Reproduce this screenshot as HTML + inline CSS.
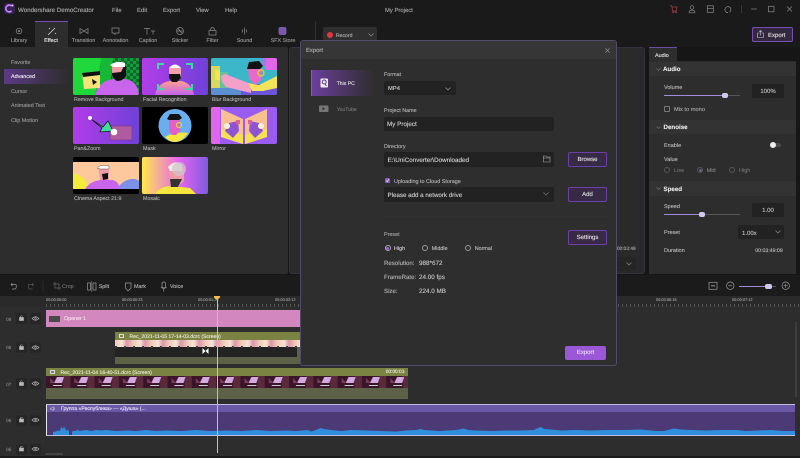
<!DOCTYPE html>
<html><head><meta charset="utf-8"><style>
html,body{margin:0;padding:0;background:#161617;width:800px;height:458px;overflow:hidden}
body{position:relative;font-family:"Liberation Sans","Noto Sans CJK SC",sans-serif;font-size:5.4px;color:#b9b9b9;text-rendering:geometricPrecision}
.a{position:absolute}
.t{position:absolute;white-space:nowrap;line-height:10px;height:10px;margin-top:1px;-webkit-text-stroke:.12px currentColor}
.c{transform:translateX(-50%)}
.b{position:absolute;box-sizing:border-box;border:1px solid #6d3fa8;background:#372a45;border-radius:2px;color:#e0e0e0;text-align:center;font-size:6px;line-height:14.500px;-webkit-text-stroke:.12px currentColor}
.in{position:absolute;background:#222223;border-radius:2px}
svg{position:absolute;overflow:visible}
.th{position:absolute;width:66px;height:37px}
.r{position:absolute;width:6px;height:6px;box-sizing:border-box;border:1px solid #666;border-radius:50%}
.lock{position:absolute;width:11px;height:11px;background:#262626;border-radius:2px}
.m{color:#a8a8a8;font-size:5.900px}
.tb{color:#999;font-size:5.400px}
.l{color:#adadad;font-size:5.300px}
.s{color:#979797;font-size:5.400px}
.d{color:#b2b2b2;font-size:5.400px}
.v{color:#cfcfcf;font-size:6.300px}
.h{color:#e6e6e6;font-weight:bold;font-size:6.200px}
.p{color:#b8b8b8;font-size:5.500px}
.rl{color:#999;font-size:3.900px}
.n{color:#888;font-size:4.500px}
.ct{color:#e8ead8;font-size:5.100px}
</style></head><body>

<!-- title bar -->
<div class="a" style="left:0;top:0;width:800px;height:47px;background:#1a1a1b"></div>
<div class="a" style="left:4px;top:3px;width:11px;height:11px;background:#3a2258;border-radius:3px"></div>
<svg style="left:4px;top:3px" width="11" height="11"><path d="M7.5 3A3.4 3.4 0 1 0 7.5 8" stroke="#c78bff" stroke-width="1.6" fill="none"/><circle cx="8.5" cy="2.5" r="1" fill="#e8d0ff"/></svg>
<div class="t" style="left:18px;top:4.500px;color:#adadad;font-size:6.200px">Wondershare DemoCreator</div>
<div class="t m" style="left:112px;top:4.500px">File</div>
<div class="t m" style="left:137px;top:4.500px">Edit</div>
<div class="t m" style="left:163px;top:4.500px">Export</div>
<div class="t m" style="left:196px;top:4.500px">View</div>
<div class="t m" style="left:225px;top:4.500px">Help</div>
<div class="t m" style="left:385px;top:4.500px">My Project</div>

<svg style="left:670px;top:5px" width="130" height="14" fill="none" stroke="#8a8a8a" stroke-width=".7">
<path d="M.2 .7H1.500L2.800 6H6.300L7 2H2" stroke="#a83e46"/><circle cx="3.200" cy="7.300" r=".6" stroke="#a83e46"/><circle cx="6" cy="7.300" r=".6" stroke="#a83e46"/>
<circle cx="22" cy="2.500" r="1.800"/><path d="M19.200 7.800V6.800Q19.200 5.200 22 5.200T24.800 6.800V7.800Z"/>
<rect x="37.300" y=".8" width="6" height="6.500"/><path d="M37.300 3.500H43.300"/>
<path d="M57 7.500A3 3 0 1 1 59.500 7.200M56 7.500H58"/>
<path d="M71.500 0V8" stroke="#444"/>
<path d="M81 4H87"/><rect x="98.500" y="1.300" width="5.500" height="5.500"/><path d="M117 1.500L122 6.500M122 1.500L117 6.500"/></svg>

<!-- toolbar tabs -->
<div class="a" style="left:35px;top:21px;width:33px;height:26px;background:#2d2d2e;border-top:1px solid #7a4fb5;box-sizing:border-box"></div>
<svg style="left:0;top:26px" width="300" height="12" fill="none" stroke="#8c8c8c" stroke-width=".7">
<circle cx="19" cy="5" r="2.800"/><circle cx="19" cy="5" r=".8"/>
<path d="M48 9L55 2" stroke="#ddd"/><path d="M49 2L50 3M55 7L56 8" stroke="#ddd"/>
<path d="M80 2.500L84 5L80 7.500ZM88 2.500L84 5L88 7.500Z"/>
<path d="M112 2H119V7H116L115 8.500L114 7H112Z"/>
<path d="M144 2.500H150M147 2.500V8.500M151 5H155M153 5V8.500"/>
<circle cx="180" cy="5" r="3.500"/><path d="M177 5L183 5M178 2.500L182 7.500"/>
<rect x="209" y="4.500" width="7" height="4.500"/><path d="M210.500 4.500V3Q212.500 0 214.500 3V4.500"/>
<path d="M244.500 1.500V8.500M242.500 3.500V6.500M246.500 3.500V6.500"/>
<rect x="279" y="1.500" width="7" height="7" rx="1.500" fill="#7a56b0" stroke="#8c67c2"/></svg>
<div class="t c tb" style="left:19px;top:34.700px">Library</div>
<div class="t c tb" style="left:51px;top:34.700px;color:#eee">Effect</div>
<div class="t c tb" style="left:83.500px;top:34.700px">Transition</div>
<div class="t c tb" style="left:115.500px;top:34.700px">Annotation</div>
<div class="t c tb" style="left:148px;top:34.700px">Caption</div>
<div class="t c tb" style="left:180px;top:34.700px">Sticker</div>
<div class="t c tb" style="left:212.500px;top:34.700px">Filter</div>
<div class="t c tb" style="left:244.500px;top:34.700px">Sound</div>
<div class="t c tb" style="left:283px;top:34.700px">SFX Store</div>

<!-- left panel -->
<div class="a" style="left:0;top:47px;width:288px;height:227px;background:#2d2d2e;border-radius:0 2px 2px 0"></div>
<div class="a" style="left:4px;top:69px;width:64px;height:15px;background:linear-gradient(90deg,#5c3a86,#2d2d2e)"></div>
<div class="t s" style="left:11px;top:57px">Favorite</div>
<div class="t s" style="left:11px;top:71.300px;color:#eee">Advanced</div>
<div class="t s" style="left:11px;top:85.700px">Cursor</div>
<div class="t s" style="left:11px;top:100.300px">Animated Text</div>
<div class="t s" style="left:11px;top:115px">Clip Motion</div>

<!-- thumbs -->
<svg class="th" style="left:73px;top:58px" viewBox="0 0 66 37"><defs><clipPath id="cp"><rect width="66" height="37" rx="2"/></clipPath>
<linearGradient id="g1" x1="0" y1="0" x2="1" y2="0"><stop offset="0" stop-color="#b13de8"/><stop offset="1" stop-color="#6f41d8"/></linearGradient>
<linearGradient id="g2" x1="0" y1="0" x2="0" y2="1"><stop offset="0" stop-color="#ff9f8f"/><stop offset="1" stop-color="#c163f0"/></linearGradient>
<linearGradient id="g4" x1="0" y1="0" x2="1" y2="0"><stop offset="0" stop-color="#ffe94a"/><stop offset=".55" stop-color="#e865f0"/><stop offset="1" stop-color="#7f5be0"/></linearGradient>
<pattern id="ck" width="6" height="6" patternUnits="userSpaceOnUse"><rect width="6" height="6" fill="#169a3a"/><rect width="3" height="3" fill="#0c6a2a"/><rect x="3" y="3" width="3" height="3" fill="#0c6a2a"/></pattern></defs>
<g clip-path="url(#cp)"><rect width="66" height="37" fill="#1fd83c"/><rect x="36" width="30" height="37" fill="url(#ck)"/><path d="M28 0H40L36 37H22Z" fill="#18b837"/>
<path d="M22 37Q26 23 40 21L52 21Q65 23 66 37Z" fill="#c964ec"/><path d="M39 8H52V18Q50 23 44 23Q40 21 39 17Z" fill="#ee9ba8"/><path d="M39 15L48 14L51 8H53V18Q50 23 44 23Q40 21 39 17Z" fill="#111"/><path d="M37 7Q44 2 52 5V9H40Z" fill="#fff"/>
<path d="M9 15L27 13V30L11 31Z" fill="#f8e27a"/><path d="M9 15L27 13V17L10 19Z" fill="#111"/><path d="M19 21L24 24L20 27Z" fill="#111"/></g></svg>

<svg class="th" style="left:142px;top:58px" viewBox="0 0 66 37"><g clip-path="url(#cp)"><rect width="66" height="37" fill="url(#g1)"/>
<path d="M13 37Q15 25 28 23H39Q50 25 52 37Z" fill="url(#g2)"/><path d="M27 10H39V20L35 24H30L27 20Z" fill="#f0a0aa"/><path d="M27 16L38 16L39 20L35 24H30L27 20Z" fill="#111"/><path d="M27 10Q33 3 39 10Z" fill="#fff"/>
<path d="M16 11V6H22M50 11V6H44M16 26V31H22M50 26V31H44" stroke="#34e0a0" stroke-width="2" fill="none"/></g></svg>

<svg class="th" style="left:211px;top:58px" viewBox="0 0 66 37"><g clip-path="url(#cp)"><rect width="66" height="37" fill="#3bb7c9"/><rect x="0" y="8" width="9" height="24" fill="#d7d860"/><rect x="4" y="12" width="5" height="10" fill="#f4e64a"/><rect x="9" y="14" width="8" height="18" fill="#66c0a0"/><rect x="30" y="26" width="36" height="11" fill="#6c55d8"/><rect x="0" y="30" width="30" height="7" fill="#5b8fd0"/><rect x="54" y="0" width="12" height="12" fill="#e266e8"/><rect x="50" y="0" width="5" height="8" fill="#8f85e0"/>
<path d="M10 18L14 16L40 26V35L15 29L11 24Z" fill="#f5a0c8"/><path d="M37 25L48 27L66 18V30L52 33H41Z" fill="#f4e35a"/><path d="M37 9H50V22L44 27L38 21Z" fill="#e86ac8"/><path d="M36 11L38 4L48 3L52 8L49 11Z" fill="#111"/><circle cx="50" cy="15" r="3" fill="none" stroke="#e0c93a" stroke-width="1.500"/></g></svg>

<svg class="th" style="left:73px;top:107px" viewBox="0 0 66 37"><g clip-path="url(#cp)"><rect width="66" height="37" fill="url(#g1)"/><rect x="37" y="19" width="22" height="14" fill="#b05aa0" stroke="#7d3d90" stroke-width=".7"/><path d="M18 12L30 20L35 14L40 24L27 25L29 21Z" fill="#3fe09a" stroke="#111" stroke-width=".7"/><circle cx="17" cy="11" r="2" fill="#fff"/><circle cx="41" cy="25" r="3.300" fill="#fff"/></g></svg>

<svg class="th" style="left:142px;top:107px" viewBox="0 0 66 37"><g clip-path="url(#cp)"><rect width="66" height="37" fill="#000"/><circle cx="33" cy="18.500" r="16.500" fill="#6aaef0"/><path d="M23 30Q33 24 46 26Q40 35 33 35Q27 35 23 30Z" fill="#f5e640"/><path d="M27 12H38V24L34 28H30L27 24Z" fill="#e25fc8"/><path d="M25 12L28 7H37L40 11L37 13H27Z" fill="#111"/><circle cx="37" cy="18" r="2.500" fill="none" stroke="#e8d040" stroke-width="1.200"/></g></svg>

<svg class="th" style="left:211px;top:107px" viewBox="0 0 66 37"><g clip-path="url(#cp)"><rect width="66" height="37" fill="#9a5cf0"/><rect width="9" height="37" fill="#e066ee"/><path d="M10 2L32 12V37L10 30Z" fill="#f8c090"/><path d="M56 2L34 12V37L56 30Z" fill="#f8c090"/><path d="M10 22L32 28V37L10 30Z" fill="#f4e050"/><path d="M56 22L34 28V37L56 30Z" fill="#f4e050"/><path d="M14 24L18 16L27 14L28 24L22 31Z" fill="#8f55d0"/><path d="M52 24L48 16L39 14L38 24L44 31Z" fill="#8f55d0"/><circle cx="16" cy="19" r="3" fill="#f4efe0"/><circle cx="50" cy="19" r="3" fill="#f4efe0"/><rect x="25" y="13" width="4" height="4" fill="#e0609a"/><rect x="37" y="13" width="4" height="4" fill="#e0609a"/></g></svg>

<svg class="th" style="left:73px;top:157px" viewBox="0 0 66 37"><g clip-path="url(#cp)"><rect width="66" height="37" fill="#000"/><rect y="5" width="66" height="27" fill="#fdc99c"/><path d="M0 16Q13 19 16 32H0Z" fill="#f4ec3a"/><path d="M44 32Q50 22 60 22Q64 22 66 24V32Z" fill="#7d8fe8"/><path d="M12 32Q18 23 30 23H40Q46 25 47 32Z" fill="#c964ec"/><path d="M25 10H36V23H27Z" fill="#ee9ba8"/><path d="M29 17L35 16V22L30 23Z" fill="#111"/><path d="M24 11Q27 7 36 9V12H27Z" fill="#fff" stroke="#333" stroke-width=".4"/></g></svg>

<svg class="th" style="left:142px;top:157px" viewBox="0 0 66 37"><g clip-path="url(#cp)"><rect width="66" height="37" fill="url(#g4)"/><path d="M13 37Q18 29 30 29L48 31L54 37Z" fill="#f4e63c"/><path d="M27 10H42V24L36 30H28Z" fill="#ee9ba8"/><path d="M28 22H40L36 30H29Z" fill="#333"/><path d="M26 10Q33 2 40 8V14H28Z" fill="#f4f0e0"/><circle cx="37" cy="12" r="7" fill="#cfc4cc" opacity=".75"/></g></svg>

<div class="t l" style="left:74px;top:94px">Remove Background</div>
<div class="t l" style="left:143px;top:94px">Facial Recognition</div>
<div class="t l" style="left:212px;top:94px">Blur Background</div>
<div class="t l" style="left:74px;top:143px">Pan&amp;Zoom</div>
<div class="t l" style="left:143px;top:143px">Mask</div>
<div class="t l" style="left:212px;top:143px">Mirror</div>
<div class="t l" style="left:74px;top:193px">Cinema Aspect 21:9</div>
<div class="t l" style="left:143px;top:193px">Mosaic</div>

<!-- preview panel -->
<div class="a" style="left:289px;top:47px;width:356px;height:227px;background:#2a2a2b;border-radius:3px;border:1px solid #37313f;box-sizing:border-box"></div>
<div class="a" style="left:315px;top:22px;width:1px;height:25px;background:#333"></div>
<div class="a" style="left:323px;top:27px;width:54px;height:20px;background:#2f2f30;border-radius:2px 2px 0 0"></div>
<div class="a" style="left:327px;top:32px;width:6px;height:6px;border-radius:50%;background:#e0383f"></div>
<div class="t" style="left:336px;top:29.700px;color:#b0b0b0;font-size:5.100px">Record</div>
<svg style="left:368px;top:33px" width="6" height="4"><path d="M.5 .5L3 3L5.500 .5" stroke="#888" fill="none" stroke-width=".7"/></svg>
<div class="t" style="left:617px;top:243.700px;color:#a8a8a8;font-size:4.800px">00:03:49</div>
<div class="a" style="left:617px;top:256.500px;width:19px;height:14px;background:#252526;border-radius:2px"></div>
<svg style="left:626px;top:262px" width="6" height="4"><path d="M.5 .5L3 3L5.500 .5" stroke="#888" fill="none" stroke-width=".7"/></svg>

<!-- export top button -->
<div class="a" style="left:752px;top:27px;width:41px;height:15px;box-sizing:border-box;border:1px solid #7a4fb5;border-radius:2px;background:#33293f"></div>
<svg style="left:757px;top:30px" width="9" height="9" fill="none" stroke="#c9c9c9" stroke-width=".6"><path d="M2.500 3H.5V7.500H6.500V3H4.500M3.500 5.500V.5M2 1.800L3.500 .5L5 1.800"/></svg>
<div class="t" style="left:768px;top:29.700px;color:#e0e0e0;font-size:6px">Export</div>

<!-- right panel -->
<div class="a" style="left:649px;top:47px;width:28px;height:15px;background:#2d2d2e;border-top:1px solid #6a4d9c;box-sizing:border-box"></div>
<div class="t" style="left:655px;top:50px;color:#e4e4e4;font-size:5.400px">Audio</div>
<div class="a" style="left:649px;top:61px;width:147px;height:213px;background:#2d2d2e"></div>
<div class="a" style="left:649px;top:62px;width:147px;height:14px;background:#333334"></div>
<div class="a" style="left:649px;top:120px;width:147px;height:14px;background:#333334"></div>
<div class="a" style="left:649px;top:181px;width:147px;height:15px;background:#333334"></div>
<svg style="left:656px;top:68px" width="6" height="130" fill="none" stroke="#777" stroke-width=".6"><path d="M.5 .5L2.500 2.500L4.500 .5M.5 58.500L2.500 60.500L4.500 58.500M.5 119.500L2.500 121.500L4.500 119.500"/></svg>
<div class="t h" style="left:663px;top:64.300px">Audio</div>
<div class="t h" style="left:663.500px;top:122.300px">Denoise</div>
<div class="t h" style="left:663.500px;top:183.700px">Speed</div>
<div class="t p" style="left:664px;top:82px">Volume</div>
<div class="a" style="left:664px;top:94.500px;width:76px;height:1px;background:#555"></div>
<div class="a" style="left:664px;top:94.500px;width:60px;height:1px;background:#a08cd8"></div>
<div class="a" style="left:722px;top:93px;width:6px;height:5px;border-radius:2px;background:#cfc8f0"></div>
<div class="in" style="left:752px;top:83.500px;width:32px;height:14.500px"></div>
<div class="t c" style="left:768px;top:86px;color:#c4c4c4;font-size:6px">100%</div>
<div class="a" style="left:664px;top:106px;width:6px;height:6px;border:1px solid #777;border-radius:1px;box-sizing:border-box"></div>
<div class="t" style="left:674px;top:104px;color:#a8a8a8;font-size:5.700px">Mix to mono</div>
<div class="t p" style="left:664px;top:140.300px">Enable</div>
<div class="a" style="left:770px;top:143px;width:11px;height:4px;border-radius:2px;background:#4a4a4a"></div>
<div class="a" style="left:770px;top:142px;width:6px;height:6px;border-radius:50%;background:#eee"></div>
<div class="t p" style="left:664px;top:154.300px">Value</div>
<div class="r" style="left:664px;top:167px;border-color:#555"></div>
<div class="t" style="left:674px;top:165.300px;color:#707070;font-size:5.500px">Low</div>
<div class="r" style="left:697px;top:167px;border-color:#555"></div>
<div class="a" style="left:698.500px;top:168.500px;width:3px;height:3px;border-radius:50%;background:#6a5a90"></div>
<div class="t" style="left:706.700px;top:165.300px;color:#808080;font-size:5.500px">Mid</div>
<div class="r" style="left:729px;top:167px;border-color:#555"></div>
<div class="t" style="left:739px;top:165.300px;color:#707070;font-size:5.500px">High</div>
<div class="t p" style="left:664px;top:201px">Speed</div>
<div class="a" style="left:664px;top:214px;width:76px;height:1px;background:#555"></div>
<div class="a" style="left:664px;top:214px;width:38px;height:1px;background:#a08cd8"></div>
<div class="a" style="left:699px;top:212px;width:6px;height:5px;border-radius:2px;background:#cfc8f0"></div>
<div class="in" style="left:752px;top:203px;width:32px;height:14px"></div>
<div class="t c" style="left:768px;top:205.300px;color:#c4c4c4;font-size:6px">1.00</div>
<div class="t p" style="left:664px;top:227px">Preset</div>
<div class="in" style="left:738px;top:225px;width:46px;height:14px"></div>
<div class="t" style="left:742px;top:227.500px;color:#c4c4c4;font-size:6px">1.00x</div>
<svg style="left:775px;top:230px" width="6" height="4"><path d="M.5 .5L3 3L5.500 .5" stroke="#888" fill="none" stroke-width=".7"/></svg>
<div class="t p" style="left:664px;top:245px">Duration</div>
<div class="t" style="left:755.300px;top:245px;color:#b8b8b8;font-size:5.200px">00:03:49:09</div>

<!-- timeline -->
<div class="a" style="left:0;top:275px;width:800px;height:21px;background:#1b1b1c"></div>
<svg style="left:0;top:279px" width="190" height="14" fill="none" stroke="#999" stroke-width=".7">
<path d="M11 5.500H16Q17 9 15 10H12M11 5.500L12.500 4M11 5.500L12.500 7"/>
<path d="M33.500 5.500H28.500Q27.500 9 29.500 10H32.500M33.500 5.500L32 4M33.500 5.500L32 7" stroke="#555"/>
<path d="M43 2V13" stroke="#333"/>
<path d="M53 5H59V11M55 3V9H61" stroke="#666"/>
<rect x="87.500" y="4" width="3" height="7"/><rect x="93" y="4" width="3" height="7"/><path d="M91.800 2V13" stroke-width=".5"/>
<path d="M125.500 4H131V9L128 12L125.500 9Z"/>
<rect x="162" y="3" width="3.500" height="6" rx="1.700"/><path d="M161 8Q163.700 11 166.500 8M163.700 10V12.500"/></svg>
<div class="t" style="left:62px;top:281px;color:#707070;font-size:5.400px">Crop</div>
<div class="t" style="left:98.700px;top:281px;color:#b4b4b4;font-size:5.400px">Split</div>
<div class="t" style="left:134px;top:281px;color:#b4b4b4;font-size:5.400px">Mark</div>
<div class="t" style="left:170px;top:281px;color:#b4b4b4;font-size:5.400px">Voice</div>

<svg style="left:705px;top:279px" width="90" height="14" fill="none" stroke="#999" stroke-width=".7">
<rect x="4" y="3.300" width="8" height="7"/><path d="M6 6.800H10" stroke-width="1"/>
<circle cx="25.300" cy="6.700" r="3.700"/><path d="M23.300 6.700H27.300"/>
<circle cx="80.700" cy="6.700" r="3.700"/><path d="M78.700 6.700H82.700M80.700 4.700V8.700"/></svg>
<div class="a" style="left:739px;top:285.500px;width:37px;height:1px;background:#555"></div>
<div class="a" style="left:739px;top:285.500px;width:29px;height:1px;background:#a08cd8"></div>
<div class="a" style="left:765px;top:283.500px;width:6.500px;height:5px;border-radius:2px;background:#cfc8f0"></div>

<div class="a" style="left:0;top:296px;width:800px;height:162px;background:#2d2d2e"></div>
<div class="a" style="left:0;top:296px;width:800px;height:11px;background:#2a2a2b"></div>
<div class="a" style="left:46px;top:304px;width:754px;height:3px;background:repeating-linear-gradient(90deg,#555 0,#555 1px,transparent 1px,transparent 4px)"></div>
<div class="t rl" style="left:46px;top:294.300px">00:00:00:00</div>
<div class="t rl" style="left:122px;top:294.300px">00:00:00:23</div>
<div class="t rl" style="left:198px;top:294.300px">00:00:01:22</div>
<div class="t rl" style="left:275px;top:294.300px">00:00:02:12</div>
<div class="t rl" style="left:656px;top:294.300px">00:00:06:18</div>
<div class="t rl" style="left:732px;top:294.300px">00:00:07:12</div>

<!-- track headers -->
<div class="t n" style="left:6.300px;top:313.700px">09</div>
<div class="t n" style="left:6.300px;top:342.300px">08</div>
<div class="t n" style="left:6.300px;top:378.700px">07</div>
<div class="t n" style="left:6.300px;top:415px">06</div>
<div class="t n" style="left:6.300px;top:444px">05</div>
<div class="lock" style="left:16px;top:313px"></div><div class="lock" style="left:30px;top:313px"></div>
<div class="lock" style="left:16px;top:342px"></div><div class="lock" style="left:30px;top:342px"></div>
<div class="lock" style="left:16px;top:378px"></div><div class="lock" style="left:30px;top:378px"></div>
<div class="lock" style="left:16px;top:414.500px"></div><div class="lock" style="left:30px;top:414.500px"></div>
<div class="lock" style="left:16px;top:443.500px"></div><div class="lock" style="left:30px;top:443.500px"></div>
<svg style="left:0;top:0" width="46" height="458" fill="none" stroke="#bbb" stroke-width=".6">
<defs><g id="lk"><rect x="19.500" y="4.500" width="4" height="3" fill="#bbb"/><path d="M20.500 4.500V3.500Q21.500 2 22.500 3.500"/><path d="M32 5.500Q35.500 2 39 5.500Q35.500 9 32 5.500Z"/><circle cx="35.500" cy="5.500" r=".8"/></g></defs>
<use href="#lk" y="313"/><use href="#lk" y="342"/><use href="#lk" y="378"/><use href="#lk" y="414.500"/><use href="#lk" y="443.500"/></svg>

<!-- clips -->
<div class="a" style="left:46px;top:310px;width:254px;height:17px;background:#d287bf"></div>
<div class="a" style="left:49px;top:315.500px;width:11px;height:6px;background:#4a4a4a"></div>
<div class="t" style="left:64px;top:313.200px;color:#f4e0ee;font-size:5.300px">Opener 1</div>

<div class="a" style="left:115px;top:331.500px;width:185px;height:32.500px;background:#5c6148"></div>
<div class="a" style="left:115px;top:331.500px;width:185px;height:8px;background:#7b8342"></div>
<div class="a" style="left:115px;top:339.500px;width:185px;height:7px;background:repeating-linear-gradient(90deg,#f0c8b8 0,#f8e4d4 7px,#dc96a8 12px,#f0c8b8 18px)"></div>
<div class="a" style="left:115px;top:346.500px;width:182px;height:10px;background:#232323"></div>
<div class="a" style="left:115px;top:345.500px;width:185px;height:2px;background:repeating-linear-gradient(90deg,#3c3c3c 0,#3c3c3c 2px,transparent 2px,transparent 9px)"></div>
<div class="a" style="left:119px;top:333.500px;width:5px;height:4px;border:1px solid #dde;box-sizing:border-box"></div>
<div class="t ct" style="left:129.500px;top:330.500px">Rec_2021-11-05 17-14-03.dcrc (Screen)</div>
<svg style="left:201px;top:347px" width="9" height="8"><path d="M1.500 1L4.500 4L1.500 7ZM7.500 1L4.500 4L7.500 7Z" fill="#fff"/></svg>

<svg style="left:46px;top:368px" width="362" height="31"><defs>
<pattern id="fs" width="24.300" height="12" patternUnits="userSpaceOnUse" y="8"><rect width="24.300" height="12" fill="#3a1428"/><rect x="17" width="7.300" height="12" fill="#5a2a3a"/><path d="M8 7L11 1H18L16 7Z" fill="#d4a8e0"/><path d="M4 2L9 7H4Z" fill="#7a3a5a"/><rect x="7" y="9" width="9" height="1" fill="#ccc"/></pattern></defs>
<rect width="362" height="31" fill="#5c6148"/><rect width="362" height="8" fill="#7b8342"/><rect y="8" width="362" height="12" fill="url(#fs)"/></svg>
<div class="a" style="left:50px;top:370px;width:5px;height:4px;border:1px solid #dde;box-sizing:border-box"></div>
<div class="t ct" style="left:60.500px;top:366.700px">Rec_2021-11-04 16-40-51.dcrc (Screen)</div>
<div class="t" style="left:385.700px;top:366.700px;color:#e8ead8;font-size:4.800px">00:00:03</div>

<div class="a" style="left:46px;top:404px;width:749px;height:32px;background:#4b3a75;border-top:1px solid #c4bcdf;border-bottom:1px solid #c4bcdf;border-left:1px solid #e8e8e8;box-sizing:border-box"></div>
<div class="a" style="left:47px;top:405px;width:748px;height:7px;background:#6a57a5"></div>
<div class="t" style="left:61px;top:403px;color:#eae4f6;font-size:5.100px">Группа «Республика» — «Душа» (...</div>
<svg style="left:50px;top:405.500px" width="6" height="6" fill="none" stroke="#ddd" stroke-width=".5"><path d="M.5 2H1.800L3.300 .7V4.800L1.800 3.500H.5ZM4.300 1.500Q5.300 2.800 4.300 4"/></svg>
<svg style="left:46px;top:424px" width="749" height="11"><path fill="#2f8fdc" d="M7 11V8L10 7.500L12 6.500L14 7L15 3L17 5L18 2.500L20 6L21 7L22 5L23 8V11ZM26 11V8L27 7L31 6.500L32 5.500L33 7L40 6L45 7L50 6L55 6.500L60 6L70 7L80 6.500L90 7L100 6L110 7L120 6.500L135 7L150 6L165 7L180 6.500L195 7L210 6L225 7L240 6.500L250 7L262 6L265 7.500L270 6L275 4L278 5L285 6L295 7L305 6L320 6.500L335 7L350 7.500L360 6.500L370 6L375 5L378 6L385 6.500L394 7L410 6L418 4.500L422 6L430 6.500L445 7L460 6.500L475 6.500L488 6L492 4L495 3L498 5L505 5.500L515 6.500L530 6L545 6.500L560 6L580 6L595 5.500L610 7L618 7L628 4.500L635 5.500L645 6L660 6.500L675 6L690 6L700 7L712 6.500L725 6L737 7L749 7V11Z"/></svg>

<!-- playhead -->
<div class="a" style="left:216.500px;top:296px;width:1px;height:157px;background:#f3c14b"></div>
<svg style="left:214px;top:296px" width="6" height="4"><path d="M0 0H6V1.500L3 4L0 1.500Z" fill="#f3c14b"/></svg>

<!-- timeline scroll/edge -->
<div class="a" style="left:46px;top:453px;width:17px;height:2px;background:#444"></div>
<div class="a" style="left:795px;top:322px;width:2px;height:75px;background:#3d3d3d"></div>
<div class="a" style="left:0;top:456px;width:800px;height:2px;background:#1a1a1b"></div>

<!-- export dialog -->
<div class="a" style="left:300px;top:40px;width:317px;height:326px;background:#2e2e2f;border:1px solid #534969;border-radius:3px;box-sizing:border-box"></div>
<div class="a" style="left:301px;top:41px;width:315px;height:18px;background:#363637;border-radius:3px 3px 0 0"></div>
<div class="t" style="left:306px;top:45.300px;color:#b4b4b4;font-size:5.900px">Export</div>
<svg style="left:604.500px;top:47.500px" width="6" height="6"><path d="M.3 .3L4.700 4.700M4.700 .3L.3 4.700" stroke="#999" stroke-width=".6"/></svg>

<div class="a" style="left:311px;top:70px;width:63px;height:26px;background:linear-gradient(90deg,#6a3f9c,#4a3560 55%,#2e2e2f);border-left:1px solid #8a55c8;box-sizing:border-box"></div>
<svg style="left:320px;top:78px" width="9" height="10"><rect x=".5" y=".5" width="7.500" height="9" rx="1" fill="#f0ecf6"/><circle cx="4.200" cy="4" r="2" fill="none" stroke="#5a3a80"/><path d="M5 6L6.500 8" stroke="#5a3a80"/></svg>
<div class="t" style="left:336.700px;top:78px;color:#e0e0e0;font-size:5.100px">This PC</div>
<svg style="left:319px;top:105px" width="10" height="8"><rect y=".5" width="9.500" height="6.500" rx="1" fill="#777"/><path d="M3.500 2L6 3.700L3.500 5.400Z" fill="#2e2e2f"/></svg>
<div class="t" style="left:336.700px;top:103.700px;color:#787878;font-size:5.100px">YouTube</div>

<div class="t d" style="left:384px;top:69px">Format</div>
<div class="in" style="left:384px;top:81px;width:72px;height:14px"></div>
<div class="t" style="left:388px;top:83px;color:#cfcfcf;font-size:5.800px">MP4</div>
<svg style="left:445px;top:87px" width="6" height="4"><path d="M.5 .5L3 3L5.500 .5" stroke="#999" fill="none" stroke-width=".7"/></svg>

<div class="t d" style="left:384px;top:105px">Project Name</div>
<div class="in" style="left:384px;top:117px;width:170px;height:14px"></div>
<div class="t v" style="left:387px;top:119.300px">My Project</div>

<div class="t d" style="left:384px;top:140.700px">Directory</div>
<div class="in" style="left:384px;top:152px;width:170px;height:14.500px"></div>
<div class="t v" style="left:387.500px;top:154.700px">E:\UniConverter\Downloaded</div>
<svg style="left:543px;top:155px" width="8" height="8" fill="none" stroke="#aaa" stroke-width=".6"><path d="M.5 1H3L3.800 2H7V7H.5ZM.5 3H7"/></svg>
<div class="b" style="left:568px;top:152px;width:39px;height:15px">Browse</div>

<div class="a" style="left:385px;top:178px;width:5px;height:5px;background:#8a55c8;border-radius:1px"></div>
<svg style="left:385px;top:178px" width="5" height="5"><path d="M1 2.500L2.200 3.700L4 1.200" stroke="#eee" stroke-width=".7" fill="none"/></svg>
<div class="t" style="left:394px;top:175.700px;color:#b2b2b2;font-size:5.450px">Uploading to Cloud Storage</div>
<div class="in" style="left:384px;top:187px;width:170px;height:15px"></div>
<div class="t" style="left:387.500px;top:190px;color:#cfcfcf;font-size:6.200px">Please add a network drive</div>
<svg style="left:543px;top:192px" width="6" height="4"><path d="M.5 .5L3 3L5.500 .5" stroke="#777" fill="none" stroke-width=".7"/></svg>
<div class="b" style="left:568px;top:187px;width:39px;height:15px">Add</div>
<div class="a" style="left:384px;top:216px;width:223px;height:1px;background:#313132"></div>

<div class="t" style="left:384px;top:229.300px;color:#a4a4a4;font-size:5.400px">Preset</div>
<div class="b" style="left:568px;top:230px;width:39px;height:15px">Settings</div>
<div class="r" style="left:384.700px;top:245px;border-color:#aaa"></div>
<div class="a" style="left:386.200px;top:246.500px;width:3px;height:3px;background:#a060e0;border-radius:50%"></div>
<div class="t" style="left:394px;top:243.300px;color:#cfcfcf;font-size:5.400px">High</div>
<div class="r" style="left:422.300px;top:245px;border-color:#999"></div>
<div class="t" style="left:431.700px;top:243.300px;color:#bebebe;font-size:5.400px">Middle</div>
<div class="r" style="left:465px;top:245px;border-color:#999"></div>
<div class="t" style="left:474.700px;top:243.300px;color:#bebebe;font-size:5.400px">Normal</div>
<div class="t" style="left:384px;top:257.700px;color:#b2b2b2;font-size:6.100px">Resolution:</div>
<div class="t" style="left:419px;top:257.700px;color:#c4c4c4;font-size:6.300px">988*672</div>
<div class="t" style="left:384px;top:271.700px;color:#b2b2b2;font-size:6.100px">FrameRate:</div>
<div class="t" style="left:419px;top:271.700px;color:#c4c4c4;font-size:6.300px">24.00 fps</div>
<div class="t" style="left:384px;top:285.700px;color:#b2b2b2;font-size:6.100px">Size:</div>
<div class="t" style="left:419px;top:285.700px;color:#c4c4c4;font-size:6.300px">224.0 MB</div>
<div class="a" style="left:565px;top:346px;width:41px;height:14px;background:#9a57d6;border-radius:2px;color:#eadff6;text-align:center;line-height:14.500px;font-size:6px;-webkit-text-stroke:.12px currentColor">Export</div>
</body></html>
